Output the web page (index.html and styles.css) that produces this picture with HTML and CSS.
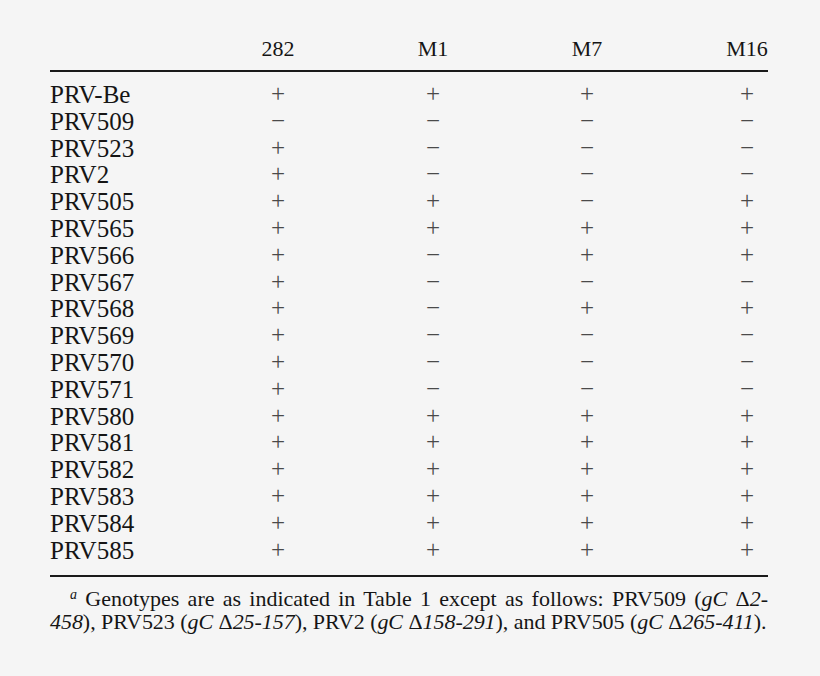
FILE: index.html
```html
<!DOCTYPE html>
<html>
<head>
<meta charset="utf-8">
<link rel="stylesheet" href="styles.css">
</head>
<body>
<div class="sheet">
  <div class="tbl">
    <div class="head">
      <div class="row">
        <span class="lbl"></span><span class="c">282</span><span class="c">M1</span><span class="c">M7</span><span class="c c4">M16</span>
      </div>
    </div>
    <div class="body">
      <div class="row"><span class="lbl">PRV-Be</span><span class="c s">+</span><span class="c s">+</span><span class="c s">+</span><span class="c c4 s">+</span></div>
      <div class="row"><span class="lbl">PRV509</span><span class="c s">−</span><span class="c s">−</span><span class="c s">−</span><span class="c c4 s">−</span></div>
      <div class="row"><span class="lbl">PRV523</span><span class="c s">+</span><span class="c s">−</span><span class="c s">−</span><span class="c c4 s">−</span></div>
      <div class="row"><span class="lbl">PRV2</span><span class="c s">+</span><span class="c s">−</span><span class="c s">−</span><span class="c c4 s">−</span></div>
      <div class="row"><span class="lbl">PRV505</span><span class="c s">+</span><span class="c s">+</span><span class="c s">−</span><span class="c c4 s">+</span></div>
      <div class="row"><span class="lbl">PRV565</span><span class="c s">+</span><span class="c s">+</span><span class="c s">+</span><span class="c c4 s">+</span></div>
      <div class="row"><span class="lbl">PRV566</span><span class="c s">+</span><span class="c s">−</span><span class="c s">+</span><span class="c c4 s">+</span></div>
      <div class="row"><span class="lbl">PRV567</span><span class="c s">+</span><span class="c s">−</span><span class="c s">−</span><span class="c c4 s">−</span></div>
      <div class="row"><span class="lbl">PRV568</span><span class="c s">+</span><span class="c s">−</span><span class="c s">+</span><span class="c c4 s">+</span></div>
      <div class="row"><span class="lbl">PRV569</span><span class="c s">+</span><span class="c s">−</span><span class="c s">−</span><span class="c c4 s">−</span></div>
      <div class="row"><span class="lbl">PRV570</span><span class="c s">+</span><span class="c s">−</span><span class="c s">−</span><span class="c c4 s">−</span></div>
      <div class="row"><span class="lbl">PRV571</span><span class="c s">+</span><span class="c s">−</span><span class="c s">−</span><span class="c c4 s">−</span></div>
      <div class="row"><span class="lbl">PRV580</span><span class="c s">+</span><span class="c s">+</span><span class="c s">+</span><span class="c c4 s">+</span></div>
      <div class="row"><span class="lbl">PRV581</span><span class="c s">+</span><span class="c s">+</span><span class="c s">+</span><span class="c c4 s">+</span></div>
      <div class="row"><span class="lbl">PRV582</span><span class="c s">+</span><span class="c s">+</span><span class="c s">+</span><span class="c c4 s">+</span></div>
      <div class="row"><span class="lbl">PRV583</span><span class="c s">+</span><span class="c s">+</span><span class="c s">+</span><span class="c c4 s">+</span></div>
      <div class="row"><span class="lbl">PRV584</span><span class="c s">+</span><span class="c s">+</span><span class="c s">+</span><span class="c c4 s">+</span></div>
      <div class="row"><span class="lbl">PRV585</span><span class="c s">+</span><span class="c s">+</span><span class="c s">+</span><span class="c c4 s">+</span></div>
    </div>
  </div>
  <div class="foot">
    <p class="fl first"><sup class="mark">a</sup> Genotypes are as indicated in Table 1 except as follows: PRV509 (<i>gC</i> Δ<i>2-</i></p>
    <p class="fl last"><i>458</i>), PRV523 (<i>gC</i> Δ<i>25-157</i>), PRV2 (<i>gC</i> Δ<i>158-291</i>), and PRV505 (<i>gC</i> Δ<i>265-411</i>).</p>
  </div>
</div>
</body>
</html>
```
FILE: styles.css
```css
html, body {
  margin: 0;
  padding: 0;
  background: #f5f5f5;
  font-family: "Liberation Serif", serif;
}
.sheet {
  width: 718px;
  margin-left: 50px;
  padding-top: 35px;
  color: #151515;
}
.row {
  display: grid;
  grid-template-columns: 150px 156px 154px 154px 1fr;
  height: 26.8px;
  line-height: 26.8px;
  font-size: 25px;
  white-space: nowrap;
}
.head .row {
  height: 27px;
  line-height: 27px;
  font-size: 22px;
}
.head {
  padding-bottom: 8px;
  border-bottom: 2px solid #1a1a1a;
}
.body {
  padding-top: 10px;
  padding-bottom: 10.6px;
  border-bottom: 2px solid #1a1a1a;
}
.c {
  text-align: center;
}
.c4 {
  justify-self: end;
  width: 44px;
  margin-right: -1px;
}
.s {
  color: #4a4a4a;
  position: relative;
  top: -1px;
}
.foot {
  padding-top: 10px;
  font-size: 22px;
  line-height: 23.5px;
}
.fl {
  margin: 0;
  text-align: left;
}
.first {
  text-align: justify;
  text-align-last: justify;
  text-indent: 20px;
}
.last {
  white-space: nowrap;
  letter-spacing: -0.05px;
}
.mark {
  font-style: italic;
  font-size: 14px;
  vertical-align: 7px;
  line-height: 0;
}
```
